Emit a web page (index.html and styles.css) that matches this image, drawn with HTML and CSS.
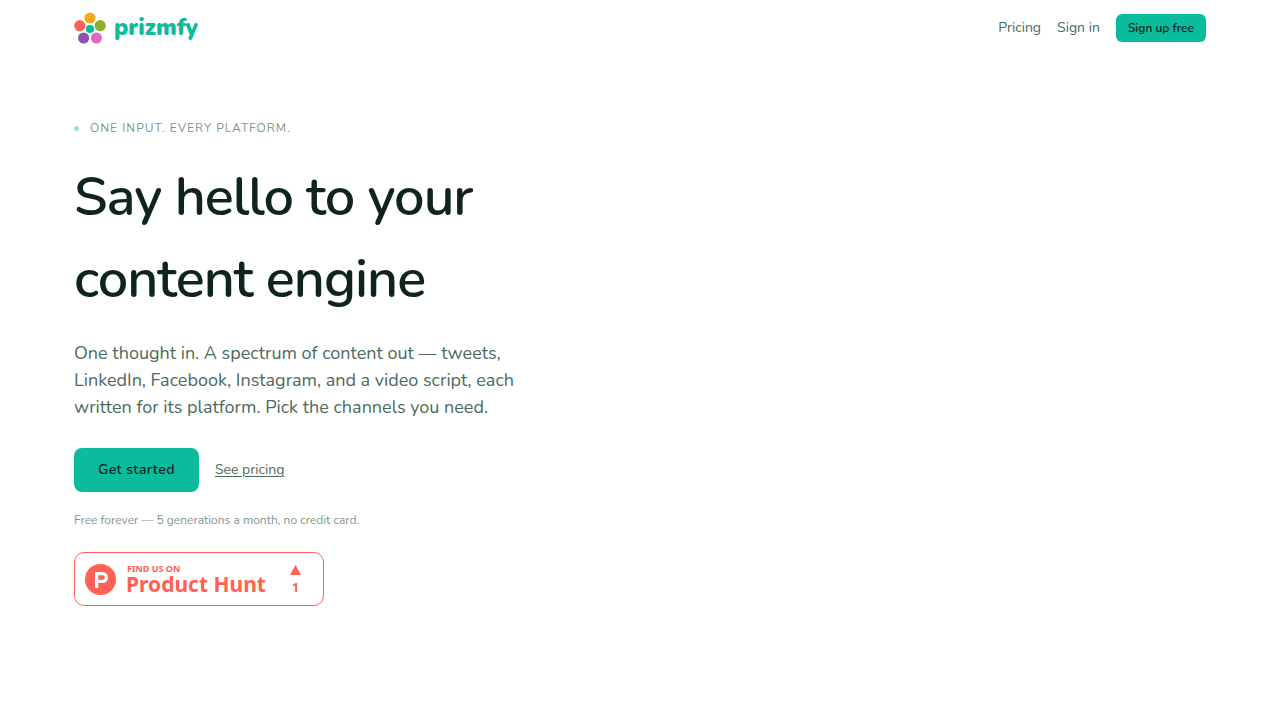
FILE: index.html
```html
<!DOCTYPE html>
<html lang="en">
<head>
  <meta charset="UTF-8">
  <meta name="viewport" content="width=device-width, initial-scale=1.0">
  <title>prizmfy</title>
  <link rel="stylesheet" href="styles.css">
</head>
<body>

  <header class="nav container">
    <a class="brand" href="#">
      <svg class="brand-mark" viewBox="0 0 32 32" aria-hidden="true">
        <circle cx="16" cy="6" r="5.6" fill="#f4ad14"/>
        <circle cx="26.2" cy="13.7" r="5.6" fill="#8bae33"/>
        <circle cx="22.4" cy="26" r="5.6" fill="#e069c0"/>
        <circle cx="9.6" cy="26" r="5.6" fill="#8d50b5"/>
        <circle cx="5.8" cy="13.7" r="5.6" fill="#ff6154"/>
        <circle cx="16" cy="17" r="4.1" fill="#0abc9c"/>
      </svg>
      <span class="brand-name">prizmfy</span>
    </a>
    <nav class="nav-links">
      <a href="#pricing">Pricing</a>
      <a href="#signin">Sign in</a>
      <button class="btn btn-small" type="button">Sign up free</button>
    </nav>
  </header>

  <main class="container">
    <section class="hero">
      <p class="eyebrow"><span class="dot"></span>One input. Every platform.</p>
      <h1>Say hello to your content engine</h1>
      <p class="lead">One thought in. A spectrum of content out — tweets, LinkedIn, Facebook, Instagram, and a video script, each written for its platform. Pick the channels you need.</p>
      <div class="actions">
        <button class="btn btn-large" type="button">Get started</button>
        <a class="see-pricing" href="#pricing">See pricing</a>
      </div>
      <p class="note">Free forever — 5 generations a month, no credit card.</p>
      <a class="ph-badge" href="#product-hunt">
        <svg class="ph-logo" viewBox="0 0 31 31" aria-hidden="true">
          <circle cx="15.5" cy="15.5" r="15.5" fill="#ff6154"/>
          <path fill="#fff" fill-rule="evenodd" d="M10 8h7.500a5.500 5.500 0 0 1 0 11h-4.300v5H10zM13.200 11.200v4.600h4.300a2.300 2.300 0 0 0 0-4.600z"/>
        </svg>
        <span class="ph-text">
          <span class="ph-small">FIND US ON</span>
          <span class="ph-name">Product Hunt</span>
        </span>
        <span class="ph-votes">
          <svg class="ph-arrow" viewBox="0 0 11 10" aria-hidden="true"><path fill="#ff6154" d="M5.500 0L11 10H0z"/></svg>
          <span>1</span>
        </span>
      </a>
    </section>
  </main>

</body>
</html>
```
FILE: styles.css
```css
* {
  box-sizing: border-box;
}

body {
  margin: 0;
  background: #fff;
  color: #10241f;
  font-family: Nunito, Lato, sans-serif;
  font-size: 14px;
  line-height: 22px;
}

h1, p {
  margin: 0;
}

a {
  color: inherit;
  text-decoration: none;
}

.container {
  max-width: 1180px;
  margin: 0 auto;
  padding: 0 24px;
}

/* top bar */
.nav {
  display: flex;
  align-items: center;
  justify-content: space-between;
  height: 56px;
}

.brand {
  display: flex;
  align-items: center;
  gap: 8px;
}

.brand-mark {
  width: 32px;
  height: 32px;
}

.brand-name {
  color: #0abc9c;
  font-size: 23px;
  font-weight: 900;
  line-height: 32px;
}

.nav-links {
  display: flex;
  align-items: center;
  gap: 16px;
  color: #4b6a60;
}

.btn {
  border: none;
  background: #0abc9c;
  color: #10241f;
  font-family: inherit;
  font-weight: 600;
  cursor: pointer;
}

.btn-small {
  height: 28px;
  padding: 0 12px;
  border-radius: 6px;
  font-size: 12px;
}

.btn-large {
  padding: 11px 24px;
  border-radius: 8px;
  font-size: 14px;
  line-height: 22px;
  letter-spacing: 0.03em;
}

/* hero */
.hero {
  max-width: 440px;
  padding: 64px 0;
}

.eyebrow {
  display: flex;
  align-items: center;
  gap: 11px;
  color: #7f968e;
  font-size: 12px;
  line-height: 16px;
  letter-spacing: 1px;
  text-transform: uppercase;
}

.dot {
  width: 5px;
  height: 5px;
  border-radius: 50%;
  background: #9de4d5;
}

h1 {
  margin-top: 20px;
  font-size: 54px;
  font-weight: 600;
  line-height: 82px;
  letter-spacing: -1px;
}

.lead {
  margin-top: 20px;
  color: #4b6a60;
  font-size: 18px;
  line-height: 27px;
}

.actions {
  display: flex;
  align-items: center;
  gap: 16px;
  margin-top: 27px;
}

.see-pricing {
  color: #4b6a60;
  text-decoration: underline;
  text-underline-offset: 2px;
}

.note {
  margin-top: 20px;
  color: #7f968e;
  font-size: 12px;
  line-height: 16px;
}

.ph-badge {
  display: flex;
  align-items: center;
  width: 250px;
  height: 54px;
  margin-top: 24px;
  padding: 0 22px 0 10px;
  border: 1px solid #ff6154;
  border-radius: 10px;
  color: #ff6154;
  font-family: "Noto Sans", sans-serif;
  font-weight: 700;
}

.ph-logo {
  width: 31px;
  height: 31px;
}

.ph-text {
  display: flex;
  flex-direction: column;
  margin-left: 10px;
}

.ph-small {
  padding-left: 1px;
  font-size: 9px;
  line-height: 10px;
}

.ph-name {
  font-size: 21px;
  line-height: 20px;
}

.ph-votes {
  display: flex;
  flex-direction: column;
  align-items: center;
  gap: 4px;
  margin-left: auto;
  padding-top: 2px;
  font-size: 13px;
  line-height: 16px;
}

.ph-arrow {
  width: 11px;
  height: 10px;
}
```
